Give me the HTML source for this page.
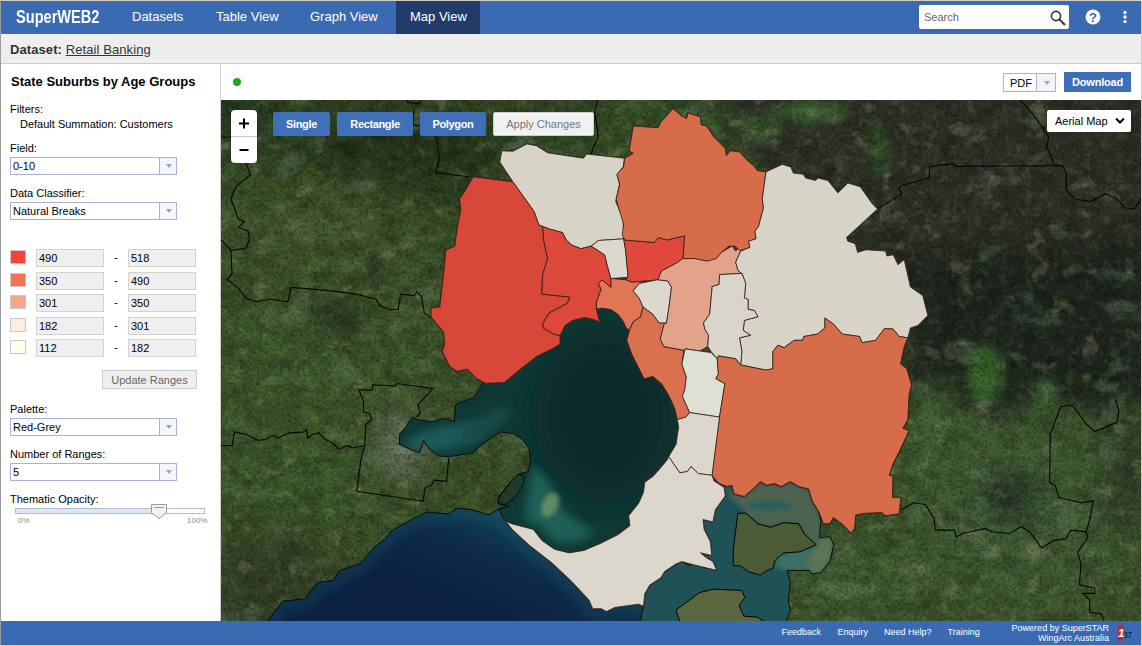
<!DOCTYPE html>
<html><head><meta charset="utf-8"><title>SuperWEB2</title>
<style>
*{box-sizing:border-box;margin:0;padding:0}
html,body{width:1142px;height:646px;overflow:hidden;background:#fff;font-family:"Liberation Sans",Arial,sans-serif;font-size:11px;color:#000}
#frame{position:absolute;left:0;top:0;width:1142px;height:646px;border:1px solid #cfcfcf;border-left-color:#9c9c9c;border-top-color:#d3cec5;pointer-events:none}
.abs{position:absolute}
#hdr{position:absolute;left:1px;top:1px;width:1140px;height:33px;background:#3a6bb2}
#logo{position:absolute;left:15px;top:5.5px;font-weight:bold;font-size:18px;color:#fff;transform-origin:0 50%;transform:scaleX(.81);white-space:nowrap;line-height:20px}
.nav{position:absolute;top:0;height:33px;line-height:31px;color:#fff;font-size:13px;white-space:nowrap}
#tabsel{position:absolute;left:395px;top:0;width:84px;height:33px;background:#213c6b}
#search{position:absolute;left:918px;top:4px;width:150px;height:24px;background:#fff;border-radius:2px}
#search span{position:absolute;left:5px;top:6px;font-size:11px;color:#666}
#dsbar{position:absolute;left:1px;top:34px;width:1140px;height:30px;background:#eee;border-bottom:1px solid #ccc}
#dsbar b{position:absolute;left:9px;top:7.5px;font-size:13px;color:#333;white-space:nowrap;letter-spacing:.09px}
#dsbar b span{font-weight:normal;text-decoration:underline}
#left{position:absolute;left:1px;top:64px;width:220px;height:557px;background:#fff;border-right:1px solid #ccc}
#left .t{position:absolute;white-space:nowrap;font-size:11px;line-height:13px}
.combo{position:absolute;left:9px;width:167px;height:18px;border:1px solid #a9b3cf;background:#fff;font-size:11px;line-height:16px;padding-left:2px}
.combo i{position:absolute;right:0;top:0;width:17px;height:16px;border-left:1px solid #a9b3cf;background:#f4f6fb}
.combo i:after{content:"";position:absolute;left:6px;top:6px;border:3.5px solid transparent;border-top:4px solid #93a3d0;border-bottom:0}
.sw{position:absolute;left:9px;width:16px;height:14px;border:1px solid #c8c8c8}
.inp{position:absolute;width:68px;height:18px;border:1px solid #d2d2d2;background:#efefef;font-size:11px;line-height:16px;padding-left:2px}
.dash{position:absolute;left:113px;font-size:11px;line-height:16px}
#upd{position:absolute;left:101px;top:306px;width:95px;height:19px;border:1px solid #ccc;background:#efefef;color:#666;font-size:11px;line-height:19px;text-align:center}
#toolbar{position:absolute;left:222px;top:64px;width:919px;height:36px;background:#fff}
#map{position:absolute;left:221px;top:100px;width:920px;height:521px;background:#2f4423;overflow:hidden}
.mbtn{position:absolute;top:12px;height:24px;background:#3f70b7;color:#fff;font-weight:bold;font-size:11px;line-height:24px;text-align:center;border-radius:2px;letter-spacing:-.35px}
#ftr{position:absolute;left:1px;top:621px;width:1140px;height:24px;background:#3a6bb2;color:#fff;font-size:9px;line-height:11px}
#ftr span{position:absolute;white-space:nowrap}
</style></head><body>
<div id="hdr">
 <div id="tabsel"></div>
 <div id="logo">SuperWEB2</div>
 <div class="nav" style="left:131px">Datasets</div>
 <div class="nav" style="left:215px">Table View</div>
 <div class="nav" style="left:309px">Graph View</div>
 <div class="nav" style="left:409px">Map View</div>
 <div id="search"><span>Search</span>
  <svg class="abs" style="left:130px;top:4px" width="18" height="18" viewBox="0 0 18 18"><circle cx="7" cy="7" r="4.6" fill="none" stroke="#333" stroke-width="1.6"/><path d="M10.4 10.4L15.5 15.5" stroke="#333" stroke-width="2" stroke-linecap="round"/></svg>
 </div>
 <svg class="abs" style="left:1084px;top:8px" width="16" height="16" viewBox="0 0 16 16"><circle cx="8" cy="8" r="7.5" fill="#fff"/><text x="8" y="12.7" text-anchor="middle" font-family="Liberation Sans, sans-serif" font-weight="bold" font-size="13" fill="#3a6bb2">?</text></svg>
 <svg class="abs" style="left:1121px;top:8px" width="6" height="16" viewBox="0 0 6 16"><circle cx="3" cy="3.5" r="1.7" fill="#fff"/><circle cx="3" cy="8" r="1.7" fill="#fff"/><circle cx="3" cy="12.6" r="1.7" fill="#fff"/></svg>
</div>
<div id="dsbar"><b>Dataset: <span>Retail Banking</span></b></div>
<div id="left">
 <div class="t" style="left:10px;top:10px;font-size:13px;font-weight:bold;line-height:15px">State Suburbs by Age Groups</div>
 <div class="t" style="left:9px;top:39px">Filters:</div>
 <div class="t" style="left:19px;top:54px">Default Summation: Customers</div>
 <div class="t" style="left:9px;top:78px">Field:</div>
 <div class="combo" style="top:93px">0-10<i></i></div>
 <div class="t" style="left:9px;top:123px">Data Classifier:</div>
 <div class="combo" style="top:138px">Natural Breaks<i></i></div>
 <div class="sw" style="top:186px;background:#f9423a"></div><div class="inp" style="left:35px;top:185px">490</div><div class="dash" style="top:185px">-</div><div class="inp" style="left:127px;top:185px">518</div>
 <div class="sw" style="top:209px;background:#f47354"></div><div class="inp" style="left:35px;top:208px">350</div><div class="dash" style="top:208px">-</div><div class="inp" style="left:127px;top:208px">490</div>
 <div class="sw" style="top:231px;background:#f4a78a"></div><div class="inp" style="left:35px;top:230px">301</div><div class="dash" style="top:230px">-</div><div class="inp" style="left:127px;top:230px">350</div>
 <div class="sw" style="top:254px;background:#faeee0"></div><div class="inp" style="left:35px;top:253px">182</div><div class="dash" style="top:253px">-</div><div class="inp" style="left:127px;top:253px">301</div>
 <div class="sw" style="top:276px;background:#fffff0"></div><div class="inp" style="left:35px;top:275px">112</div><div class="dash" style="top:275px">-</div><div class="inp" style="left:127px;top:275px">182</div>
 <div id="upd">Update Ranges</div>
 <div class="t" style="left:9px;top:339px">Palette:</div>
 <div class="combo" style="top:354px">Red-Grey<i></i></div>
 <div class="t" style="left:9px;top:384px">Number of Ranges:</div>
 <div class="combo" style="top:399px">5<i></i></div>
 <div class="t" style="left:9px;top:429px">Thematic Opacity:</div>
 <div class="abs" style="left:14px;top:444px;width:190px;height:6px;border:1px solid #b5b8c8;background:#fff"><div style="width:140px;height:4px;background:#dbe8fa"></div></div>
 <svg class="abs" style="left:150px;top:440px" width="17" height="16" viewBox="0 0 17 16"><path d="M.5 .5H15.5V8.5L8 14.8L.5 8.5Z" fill="#f2f2f2" stroke="#9a9a9a"/><path d="M3 3.5H13" stroke="#999"/></svg>
 <div class="t" style="left:17px;top:450px;font-size:8px;color:#888">0%</div>
 <div class="t" style="left:186px;top:450px;font-size:8px;color:#888">100%</div>
</div>
<div id="toolbar">
 <div class="abs" style="left:11px;top:14px;width:8px;height:8px;border-radius:4px;background:#1ea81e"></div>
 <div class="abs" style="left:781px;top:9px;width:53px;height:19px;border:1px solid #a9b3cf;font-size:11px;line-height:18px;padding-left:6px">PDF<i class="abs" style="right:0;top:0;width:19px;height:17px;border-left:1px solid #a9b3cf;background:#f3f4f7"></i><i class="abs" style="right:5.5px;top:7px;border:3.5px solid transparent;border-top:4px solid #97a7d2;border-bottom:0"></i></div>
 <div class="abs" style="left:842px;top:8px;width:67px;height:20px;background:#3e6eb5;color:#fff;font-weight:bold;font-size:11px;line-height:20px;text-align:center;letter-spacing:-.2px">Download</div>
</div>
<div id="map">
<!--MAPSVG--><svg class="abs" style="left:0;top:0" width="920" height="521" viewBox="221 100 920 521">
<defs>
<filter id="b30" x="-50%" y="-50%" width="200%" height="200%"><feGaussianBlur stdDeviation="28"/></filter>
<filter id="b15" x="-50%" y="-50%" width="200%" height="200%"><feGaussianBlur stdDeviation="13"/></filter>
<filter id="b6" x="-50%" y="-50%" width="200%" height="200%"><feGaussianBlur stdDeviation="5"/></filter>
<filter id="b2" x="-20%" y="-20%" width="140%" height="140%"><feGaussianBlur stdDeviation="2"/></filter>
<filter id="tex" x="0" y="0" width="100%" height="100%"><feTurbulence type="fractalNoise" baseFrequency="0.05 0.07" numOctaves="4" seed="7"/><feColorMatrix type="matrix" values="0 0 0 0 0  0 0 0 0 0  0 0 0 0 0  1.4 1.0 0 0 -0.85"/></filter>
<filter id="tex2" x="0" y="0" width="100%" height="100%"><feTurbulence type="fractalNoise" baseFrequency="0.12" numOctaves="3" seed="3"/><feColorMatrix type="matrix" values="0 0 0 0 .8  0 0 0 0 .8  0 0 0 0 .6  1.5 1.5 0 0 -1.45"/></filter>
<filter id="tex3" x="0" y="0" width="100%" height="100%"><feTurbulence type="fractalNoise" baseFrequency="0.35" numOctaves="2" seed="5"/><feColorMatrix type="matrix" values="0 0 0 0 0  0 0 0 0 0  0 0 0 0 0  2.4 0 0 0 -1.0"/></filter>
<filter id="tex4" x="0" y="0" width="100%" height="100%"><feTurbulence type="fractalNoise" baseFrequency="0.022 0.03" numOctaves="4" seed="11"/><feColorMatrix type="matrix" values="0 0 0 0 .12  0 0 0 0 .19  0 0 0 0 .11  8 0 0 0 -5.0"/></filter>
<filter id="tex5" x="0" y="0" width="100%" height="100%"><feTurbulence type="fractalNoise" baseFrequency="0.04 0.05" numOctaves="4" seed="23"/><feColorMatrix type="matrix" values="0 0 0 0 .45  0 0 0 0 .38  0 0 0 0 .2  0 8 0 0 -5.3"/></filter>
<linearGradient id="seag" gradientUnits="userSpaceOnUse" x1="500" y1="505" x2="455" y2="610"><stop offset="0" stop-color="#144a58"/><stop offset=".25" stop-color="#103650"/><stop offset=".5" stop-color="#0e2947"/><stop offset="1" stop-color="#0d2142"/></linearGradient>
<clipPath id="mc"><rect x="221" y="100" width="920" height="521"/></clipPath>
<clipPath id="seac"><polygon points="230,665 266.8,622 282.9,601.2 305.2,598.7 317.6,582.6 333.7,580.2 339.9,570.3 359.8,564.1 374.6,546.7 384.5,539.3 392,530.6 409.3,520.7 426.7,512 449,514 456.4,508.3 471.2,509.6 489,514.9 498.9,508.7 506,521.4 512.2,529.4 529.6,545.5 551.9,562.8 571.7,581.4 589,600 592.7,608.7 601.4,608.7 606.4,611.6 615,607.4 638.6,604.2 643.5,606.2 660,600 690,600 700,622 705,665"/></clipPath>
<clipPath id="bayc"><polygon points="482.8,383 474.1,397.2 464.2,400.9 455.6,404.6 454.3,421.9 444.4,418.2 430.8,421.9 417.2,419.5 412.2,417 406,426.9 399.8,433.1 399.3,444.2 409.7,449.2 419.6,452.9 423.4,440.5 429.6,449.2 439.5,456.1 449.4,456.6 472.9,452.9 484.1,443 500.2,431.9 513.8,433.8 522.5,439.3 528.7,448 530.6,459.1 528.7,471.5 518.8,474 508.8,483.9 498.9,496.3 497.7,503.7 508.8,506.2 498.9,508.7 502,516 506,521.4 520,535 560,560 600,555 640,530 660,480 685,460 690,420 690,380 660,330 640,300 600,300 570,310 550,340 520,360"/></clipPath>
<clipPath id="wpc"><polygon points="690,566 696,530 706,500 714,484 722,480 733,482 734.3,493.9 744.2,496.4 752.9,488.9 760.3,481.5 766.5,485.2 774,483.5 781.4,486.5 790.1,481.5 798.8,486.5 808.7,488.9 812.4,501.3 818.6,511.2 820.9,521.4 819.7,537.8 830.2,536.6 833.7,544.8 830.2,561.1 820.9,572.8 811.5,574 809.2,570.5 787,570.5 790.5,582.2 788.1,600.9 790.5,610.2 785.8,622 640,622 643.5,606.2 644.8,593.8 649.7,585.1 660.9,577.7 664.6,571.5 675.7,564.1 681.9,561.6"/></clipPath>
</defs>
<g clip-path="url(#mc)">
<rect x="221" y="100" width="920" height="521" fill="#40592c"/>
<polygon points="650,90 700,112 740,140 765,170 800,200 860,260 905,300 915,340 900,400 925,415 960,400 1000,425 1040,405 1075,400 1100,425 1150,400 1150,90" fill="#32362a" filter="url(#b6)"/>
<polygon points="880,255 1150,240 1150,395 1100,415 1070,395 1040,400 1000,415 960,395 925,405 905,390 915,330" fill="#232b20" filter="url(#b15)"/>
<ellipse cx="400" cy="150" rx="110" ry="55" fill="#26371f" filter="url(#b30)"/>
<ellipse cx="250" cy="120" rx="60" ry="40" fill="#2c4224" filter="url(#b30)"/>
<ellipse cx="330" cy="230" rx="90" ry="40" fill="#4a6030" filter="url(#b30)"/>
<ellipse cx="320" cy="370" rx="120" ry="60" fill="#44602d" filter="url(#b30)"/>
<ellipse cx="300" cy="490" rx="100" ry="50" fill="#43602d" filter="url(#b30)"/>
<ellipse cx="340" cy="318" rx="26" ry="20" fill="#2b3c25" filter="url(#b15)"/>
<ellipse cx="375" cy="272" rx="9" ry="16" fill="#2e3f27" filter="url(#b6)"/>
<ellipse cx="265" cy="585" rx="75" ry="45" fill="#39432a" filter="url(#b30)"/>
<ellipse cx="402" cy="445" rx="22" ry="35" fill="#74806a" filter="url(#b15)"/>
<ellipse cx="560" cy="112" rx="70" ry="25" fill="#2d4526" filter="url(#b30)"/>
<ellipse cx="690" cy="112" rx="60" ry="18" fill="#3a5a2d" filter="url(#b15)"/>
<ellipse cx="1030" cy="520" rx="120" ry="100" fill="#466439" filter="url(#b30)"/>
<ellipse cx="930" cy="440" rx="30" ry="60" fill="#446636" filter="url(#b15)"/>
<ellipse cx="860" cy="585" rx="60" ry="40" fill="#4a6a39" filter="url(#b30)"/>
<ellipse cx="1010" cy="495" rx="32" ry="18" fill="#27392a" filter="url(#b15)"/>
<ellipse cx="1125" cy="470" rx="25" ry="70" fill="#34482a" filter="url(#b15)"/>
<ellipse cx="985" cy="375" rx="18" ry="30" fill="#3d6a2e" filter="url(#b6)"/>
<ellipse cx="1045" cy="400" rx="12" ry="22" fill="#3a6230" filter="url(#b6)"/>
<ellipse cx="810" cy="112" rx="40" ry="12" fill="#3d6330" filter="url(#b6)"/>
<ellipse cx="878" cy="150" rx="10" ry="30" fill="#34502c" filter="url(#b6)"/>
<ellipse cx="760" cy="128" rx="25" ry="12" fill="#3a5a2e" filter="url(#b6)"/>
<rect x="221" y="100" width="920" height="521" filter="url(#tex)" fill="#000" opacity=".3"/>
<rect x="221" y="100" width="920" height="521" filter="url(#tex2)" opacity=".12"/>
<rect x="221" y="100" width="920" height="521" filter="url(#tex4)" opacity=".4"/>
<rect x="221" y="100" width="920" height="521" filter="url(#tex5)" opacity=".22"/>
<rect x="221" y="100" width="920" height="521" filter="url(#tex3)" opacity=".3"/>
<polygon points="230,665 266.8,622 282.9,601.2 305.2,598.7 317.6,582.6 333.7,580.2 339.9,570.3 359.8,564.1 374.6,546.7 384.5,539.3 392,530.6 409.3,520.7 426.7,512 449,514 456.4,508.3 471.2,509.6 489,514.9 498.9,508.7 506,521.4 512.2,529.4 529.6,545.5 551.9,562.8 571.7,581.4 589,600 592.7,608.7 601.4,608.7 606.4,611.6 615,607.4 638.6,604.2 643.5,606.2 660,600 690,600 700,622 705,665" fill="url(#seag)"/>
<g clip-path="url(#seac)">
<polygon points="230,665 266.8,622 282.9,601.2 305.2,598.7 317.6,582.6 333.7,580.2 339.9,570.3 359.8,564.1 374.6,546.7 384.5,539.3 392,530.6 409.3,520.7 426.7,512 449,514 456.4,508.3 471.2,509.6 489,514.9 498.9,508.7 506,521.4 512.2,529.4 529.6,545.5 551.9,562.8 571.7,581.4 589,600 592.7,608.7 601.4,608.7 606.4,611.6 615,607.4 638.6,604.2 643.5,606.2 660,600 690,600 700,622 705,665" fill="none" stroke="#165a68" stroke-width="22" filter="url(#b6)" opacity=".3"/>
</g>
<polygon points="230,665 266.8,622 282.9,601.2 305.2,598.7 317.6,582.6 333.7,580.2 339.9,570.3 359.8,564.1 374.6,546.7 384.5,539.3 392,530.6 409.3,520.7 426.7,512 449,514 456.4,508.3 471.2,509.6 489,514.9 498.9,508.7 506,521.4 512.2,529.4 529.6,545.5 551.9,562.8 571.7,581.4 589,600 592.7,608.7 601.4,608.7 606.4,611.6 615,607.4 638.6,604.2 643.5,606.2 660,600 690,600 700,622 705,665" fill="none" stroke="#050a0a" stroke-width="1"/>
<polygon points="482.8,383 474.1,397.2 464.2,400.9 455.6,404.6 454.3,421.9 444.4,418.2 430.8,421.9 417.2,419.5 412.2,417 406,426.9 399.8,433.1 399.3,444.2 409.7,449.2 419.6,452.9 423.4,440.5 429.6,449.2 439.5,456.1 449.4,456.6 472.9,452.9 484.1,443 500.2,431.9 513.8,433.8 522.5,439.3 528.7,448 530.6,459.1 528.7,471.5 518.8,474 508.8,483.9 498.9,496.3 497.7,503.7 508.8,506.2 498.9,508.7 502,516 506,521.4 520,535 560,560 600,555 640,530 660,480 685,460 690,420 690,380 660,330 640,300 600,300 570,310 550,340 520,360" fill="#0f3834"/>
<g clip-path="url(#bayc)">
<ellipse cx="605" cy="415" rx="70" ry="85" fill="#0a2b2b" filter="url(#b15)"/>
<ellipse cx="445" cy="438" rx="42" ry="12" fill="#1d5a58" filter="url(#b6)" transform="rotate(-12 445 438)"/>
<ellipse cx="485" cy="425" rx="30" ry="9" fill="#184c4a" filter="url(#b6)" transform="rotate(-30 485 425)"/>
<path d="M532 466 Q550 476 556 500 Q568 520 596 532 Q576 548 552 540 Q540 522 524 520 Q528 495 532 466Z" fill="#1f6058" filter="url(#b6)"/>
<ellipse cx="550" cy="505" rx="8" ry="13" fill="#5f8a62" filter="url(#b2)" transform="rotate(25 550 505)"/>
</g>
<polygon points="482.8,383 474.1,397.2 464.2,400.9 455.6,404.6 454.3,421.9 444.4,418.2 430.8,421.9 417.2,419.5 412.2,417 406,426.9 399.8,433.1 399.3,444.2 409.7,449.2 419.6,452.9 423.4,440.5 429.6,449.2 439.5,456.1 449.4,456.6 472.9,452.9 484.1,443 500.2,431.9 513.8,433.8 522.5,439.3 528.7,448 530.6,459.1 528.7,471.5 518.8,474 508.8,483.9 498.9,496.3 497.7,503.7 508.8,506.2 498.9,508.7 502,516 506,521.4 520,535 560,560 600,555 640,530 660,480 685,460 690,420 690,380 660,330 640,300 600,300 570,310 550,340 520,360" fill="none" stroke="#070d0b" stroke-width="1"/>
<polygon points="690,566 696,530 706,500 714,484 722,480 733,482 734.3,493.9 744.2,496.4 752.9,488.9 760.3,481.5 766.5,485.2 774,483.5 781.4,486.5 790.1,481.5 798.8,486.5 808.7,488.9 812.4,501.3 818.6,511.2 820.9,521.4 819.7,537.8 830.2,536.6 833.7,544.8 830.2,561.1 820.9,572.8 811.5,574 809.2,570.5 787,570.5 790.5,582.2 788.1,600.9 790.5,610.2 785.8,622 640,622 643.5,606.2 644.8,593.8 649.7,585.1 660.9,577.7 664.6,571.5 675.7,564.1 681.9,561.6" fill="#1e5256"/>
<g clip-path="url(#wpc)">
<polygon points="726,488 734.3,493.9 744.2,496.4 752.9,488.9 760.3,481.5 766.5,485.2 774,483.5 781.4,486.5 790.1,481.5 798.8,486.5 808.7,488.9 812.4,501.3 818.6,511.2 820.9,521.4 819.7,537.8 816.2,544.8 804.5,534.3 798.7,523.8 783.5,522.6 770.6,527.3 757.8,523.8 746.1,513.2 740,505 732,500" fill="#4e6450" filter="url(#b2)"/>
<polygon points="819.7,537.8 830.2,536.6 833.7,544.8 830.2,561.1 820.9,572.8 811.5,574 809.2,570.5 800,565 805,555 816.2,544.8" fill="#5c7357" filter="url(#b2)"/>
<polygon points="773,566 778,556 790,552 816.2,544.8 806,558 809,571 787,571" fill="#3d6f62" filter="url(#b2)"/>
<ellipse cx="770" cy="506" rx="22" ry="5" fill="#2a5f5c" filter="url(#b2)"/>
</g>
<polygon points="690,566 696,530 706,500 714,484 722,480 733,482 734.3,493.9 744.2,496.4 752.9,488.9 760.3,481.5 766.5,485.2 774,483.5 781.4,486.5 790.1,481.5 798.8,486.5 808.7,488.9 812.4,501.3 818.6,511.2 820.9,521.4 819.7,537.8 830.2,536.6 833.7,544.8 830.2,561.1 820.9,572.8 811.5,574 809.2,570.5 787,570.5 790.5,582.2 788.1,600.9 790.5,610.2 785.8,622 640,622 643.5,606.2 644.8,593.8 649.7,585.1 660.9,577.7 664.6,571.5 675.7,564.1 681.9,561.6" fill="none" stroke="#070d0b" stroke-width="1"/>
<polygon points="737.9,513.2 746.1,513.2 757.8,523.8 770.6,527.3 783.5,522.6 798.7,523.8 804.5,534.3 816.2,544.8 799.8,551.8 783.5,553 775.3,560 773,568.2 767.1,570.5 760.1,575.2 748.4,571.7 740.2,565.8 733.2,565.8 733.2,549.5" fill="#4d5a37" stroke="#000" stroke-width="1"/>
<polygon points="676,610 690,599.7 699.3,592.7 713.4,589.2 741.4,590.4 744.9,597.4 739.1,605.5 743.8,616.1 757.8,617.2 764.8,622 680,622" fill="#5a663e" stroke="#000" stroke-width="1"/>
<polygon points="518.8,474 523.7,476.5 523.7,483.9 513.8,498.8 503.9,505 497.7,501.2 501.4,493.8 511.3,481.4" fill="#1f3a28" stroke="#000" stroke-width=".8"/>
<polyline points="221,137 231,137.2" fill="none" stroke="#050505" stroke-width="1.1"/>
<polyline points="245.8,163.2 250.7,174.3 235.9,186.7 230.9,199.1 238.3,218.9 244.5,221.4 238.3,227.4 248.3,231.1 249.5,239.8 245.8,248.5 230.9,250.2 221,239.8" fill="none" stroke="#050505" stroke-width="1.1"/>
<polyline points="230.9,250.2 232.1,274.5 227.2,279.5 238.3,288.1 245.8,298 255.7,301.8 270.6,299.3 287.9,301.8 291.1,287.4 315.2,289.4 339.9,291.9 357.3,294.3 375.9,299.3 379.6,305.5 389.5,309.7 398.2,309.2 400.6,294.3 414.3,295.6 416.7,291.9 421.7,296.8 424.2,312.9 431.6,317.9" fill="none" stroke="#050505" stroke-width="1.1"/>
<polyline points="406.8,100 408.1,102.5 419.2,103.7 420.4,100" fill="none" stroke="#050505" stroke-width="1.1"/>
<polyline points="414,110 413,124.8 419.2,126 436.6,137.2 439.4,160 435.6,172.5 470,177" fill="none" stroke="#050505" stroke-width="1.1"/>
<polyline points="597.2,100 594.7,112.4 598.4,137.2 593.4,147.1 591,154" fill="none" stroke="#050505" stroke-width="1.1"/>
<polyline points="358.5,389.7 372.1,390.2 372.6,384.8 395.7,386 396.9,383.5 432.8,388.5 418,404.6 420.4,413.3 416.7,417" fill="none" stroke="#050505" stroke-width="1.1"/>
<polyline points="358.5,389.7 363.5,400.9 363.5,412 369.7,413.3 372.1,419.5 365.9,424.4 364.7,445.5 361,459.1 356.8,491.3 422.9,501.2 425.4,487.6 431.6,485.1 434.1,480.2 446.5,481.4 448.9,457.9" fill="none" stroke="#050505" stroke-width="1.1"/>
<polyline points="221,445.5 232.1,445.5 234.6,431.9 245.8,434.3 258.2,440.5 265.6,439.3 273,435.6 278,438 289.1,433.1 304,431.9 306.5,429.4 307.7,438 312.7,434.3 318.9,433.1 325.1,439.3 332.5,443 338.7,449.2 347.4,445.5 352.3,448 364.7,445.5" fill="none" stroke="#050505" stroke-width="1.1"/>
<polyline points="1020.6,100 1035.4,117.3 1049,137.2 1046.6,145.8 1054,164.9 1062.7,165.7 1066.4,173.1 1066.4,190.4 1075.1,199.1 1090,201.6 1106,193.7 1117.2,199.1 1124.6,207.8 1134.5,209 1140.7,199.1" fill="none" stroke="#050505" stroke-width="1.1"/>
<polyline points="1062.7,165.7 956.1,166.4 953.7,163.9 941.3,164.9 930.1,166.4 928.9,178 920.2,180.5 901.6,185.5 899.2,188 901.6,194.1 876.9,209" fill="none" stroke="#050505" stroke-width="1.1"/>
<polyline points="901.4,509.6 913.4,502.7 925.3,504.4 933.9,518.1 935.6,530.1 954.4,530.1 956.1,536.9 963,533.5 985.2,528.4 992.1,531.8 1009.2,533.5 1021.2,526.7 1029.7,531.8 1041.7,547.9 1053.7,540.4 1065.7,538.7 1070.8,530.1 1086.2,531.8 1089.7,519.8 1093.1,501 1081.1,502.7 1058.8,497.6 1055.4,485.6 1049.6,482.2 1050.3,434.2 1060.6,406.8 1072.5,405.1 1086.2,424 1094.8,431.5 1117,422.3 1118.8,410.3 1115.3,400" fill="none" stroke="#050505" stroke-width="1.1"/>
<polyline points="1086.2,531.8 1088,537 1077.7,552.3 1081.1,564.3 1079.4,584.9 1094.8,588.3 1094.8,593.4 1082.8,593.4 1089.7,600.3 1089.7,612.3 1101.6,614 1103.4,621" fill="none" stroke="#050505" stroke-width="1.1"/>
<polygon points="499.8,162 501.8,150.8 512.9,151.3 527,143.9 536.5,145.8 547.6,152.8 583.5,158.2 586.5,154 624.4,158.2 623.2,166.9 617,174.3 619.5,184.2 615.7,201.6 623.2,218.9 623.7,238.8 598.4,240.5 591,246.2 581,248.7 571.6,245 566.2,240 562.5,232.6 548.8,228.8 538.9,225.1 534,211.5 512.9,181.8" fill="#3a2a22" stroke="#3a2a22" stroke-width="1.6" stroke-linejoin="round"/>
<polygon points="598.4,240.5 623.7,238.8 625.6,250 628.1,277.3 610.8,278.5 607,264.9 604.6,255 597.2,250 591,246.2" fill="#3a2a22" stroke="#3a2a22" stroke-width="1.6" stroke-linejoin="round"/>
<polygon points="623.7,238.8 624.8,240 654.5,242.5 658.2,237.5 666.9,240 684.7,235.8 683,258.6 677.7,262.4 661.6,271 657.9,279.7 646.7,281 631.8,282.2 625.6,279.7 628.1,277.3 625.6,250" fill="#3a2a22" stroke="#3a2a22" stroke-width="1.6" stroke-linejoin="round"/>
<polygon points="602.1,279.7 610.8,287.2 610.8,278.5 625.6,279.7 631.8,282.2 646.7,281 639.3,283.4 633.1,290.9 639.3,298.3 643,307 640.5,316.9 633.1,321.9 629.4,330.5 625.6,326.8 623.7,321.9 618.2,314.4 610.8,309.5 602.1,308.2 596.4,309 596.4,302 600.9,289.6 598.4,283.4" fill="#3a2a22" stroke="#3a2a22" stroke-width="1.6" stroke-linejoin="round"/>
<polygon points="633.1,290.9 639.3,283.4 657.9,279.7 667.8,281 671.5,287.2 669,307 666.5,323.1 659.1,323.1 652.9,314.4 643,307 639.3,298.3" fill="#3a2a22" stroke="#3a2a22" stroke-width="1.6" stroke-linejoin="round"/>
<polygon points="629.4,330.5 633.1,321.9 640.5,316.9 643,307 652.9,314.4 659.1,323.1 666.5,323.1 664,324.3 660.3,339.2 664,346.6 683.9,350.3 681.9,364 686.3,377 684.8,390 682.3,396 689.7,412.6 686,417.1 677.3,419.6 675.2,410 672.7,403.6 667.8,393.7 661.6,383.8 652.9,376.4 644.2,378.8 638,366.5 631.8,354.1 626.9,340.4" fill="#3a2a22" stroke="#3a2a22" stroke-width="1.6" stroke-linejoin="round"/>
<polygon points="682.6,258.7 694.9,258.5 707.3,261 717.2,257.3 719.6,253.5 725.8,249.8 732,246.1 735.7,251.1 739.5,247.3 740.7,251.1 735.7,262.2 738.2,270.9 741.9,273.4 719.6,274.6 719.1,284.5 712.2,286.5 709.7,314.2 703.5,322.9 704.8,329.1 708.5,335.3 707.8,346.5 700,351 685,348.9 683.9,350.3 664,346.6 660.3,339.2 664,324.3 666.5,323.1 669,307 671.5,287.2 667.8,281 657.9,279.7 661.6,271 677.7,262.4" fill="#3a2a22" stroke="#3a2a22" stroke-width="1.6" stroke-linejoin="round"/>
<polygon points="624.8,158.2 633.4,153.3 629.2,150.8 633.4,126 658.2,127.8 660.7,122.3 673.1,108.7 681.8,116.1 686.7,118.6 688,112.9 700.3,116.8 701.1,124.8 706.5,126 714,137.2 725.1,148.3 726.4,155.7 730.1,150.8 740,152 746.2,159.5 753.6,165.7 757.3,170.6 766,171.9 762.3,199.1 763.5,207.8 758.6,226.4 754.9,231.3 756.1,238.8 748.7,241.2 749.9,247.4 740,250.6 735,246.2 728.8,246.2 721.4,252.4 716.5,258.6 707.3,261 694.9,258.5 683,258.6 684.7,235.8 666.9,240 658.2,237.5 654.5,242.5 624.8,240 622.3,235 623.5,223.9 616.1,199.1 619.8,184.2 616.8,174.3 623.5,166.9" fill="#3a2a22" stroke="#3a2a22" stroke-width="1.6" stroke-linejoin="round"/>
<polygon points="766,171.9 782.1,164.4 790.8,166.9 793.3,173.1 803.2,174.3 805.7,178 815.6,180.5 818,178 827.9,180.5 837.9,192.9 847.8,183 860.2,186.7 872.5,204.1 877.5,209 846.5,237.5 847.8,241.2 855.2,243.7 857.7,252.4 865.8,249.8 885.6,251.1 886.9,256 893.1,254.8 898,264.7 904.2,259.7 910.4,287 922.8,295.7 927.8,315.5 917.9,325.4 910.4,327.9 907.9,337.8 899.3,336.5 893.1,329.1 884.4,328.6 875.7,340.3 862.1,342.7 859.6,336.5 842.3,334.1 833.6,324.2 824.9,318 824.9,327.9 817.5,334.1 803.9,336.5 802.6,340.3 794,340.3 784.1,347.7 777.9,345.2 772.9,351.4 772.9,368.8 765.5,370 740.7,365 741.9,351.4 739.5,337.8 750.6,335.3 743.2,330.3 744.4,320.4 758,316.7 754.3,310.5 748.1,309.3 748.1,299.4 744.4,298.1 745.7,283.3 741.9,273.4 738.2,270.9 735.7,262.2 740.7,251.1 749.9,247.4 748.7,241.2 756.1,238.8 754.9,231.3 758.6,226.4 763.5,207.8 762.3,199.1" fill="#3a2a22" stroke="#3a2a22" stroke-width="1.6" stroke-linejoin="round"/>
<polygon points="741.9,273.4 719.6,274.6 719.1,284.5 712.2,286.5 709.7,314.2 703.5,322.9 704.8,329.1 708.5,335.3 707.8,346.5 711,351.4 717.2,358.8 718.4,355.9 735.7,358.8 740.7,365 741.9,351.4 739.5,337.8 750.6,335.3 743.2,330.3 744.4,320.4 758,316.7 754.3,310.5 748.1,309.3 748.1,299.4 744.4,298.1 745.7,283.3" fill="#3a2a22" stroke="#3a2a22" stroke-width="1.6" stroke-linejoin="round"/>
<polygon points="685,348.9 700,351 711,352.6 717.2,358.8 718.4,373.7 715.9,378.7 724.9,383.6 719.5,417.1 689.7,412.6 682.3,396 684.8,390 686.3,377 681.9,364" fill="#3a2a22" stroke="#3a2a22" stroke-width="1.6" stroke-linejoin="round"/>
<polygon points="717.2,358.8 718.4,355.9 735.7,358.8 740.7,365 765.5,370 772.9,368.8 772.9,351.4 777.9,345.2 784.1,347.7 794,340.3 802.6,340.3 803.9,336.5 817.5,334.1 824.9,327.9 824.9,318 833.6,324.2 842.3,334.1 859.6,336.5 862.1,342.7 875.7,340.3 884.4,328.6 893.1,329.1 899.3,336.5 907.9,337.8 904.2,346.5 900.5,363.8 906.7,368.8 911.5,384.9 909,394.8 907.8,419.6 902.8,428.2 909,430.7 900.3,449.3 892.9,464.2 889.2,475.3 892.9,476.5 892.4,497.6 900.8,497.6 899.1,513.7 885.5,515.7 881.8,512.5 865.6,513.2 855.7,514.9 854.5,528.6 851,533 843.3,524.9 833.4,517.4 829.7,523.6 823.5,523.6 818.6,511.2 812.4,501.3 808.7,488.9 798.8,486.5 790.1,481.5 781.4,486.5 774,483.5 766.5,485.2 760.3,481.5 752.9,488.9 744.2,496.4 734.3,493.9 731.9,485.2 726.9,486.5 718.2,482.7 712,475.3 719.5,417.1 724.9,383.6 715.9,378.7 718.4,373.7" fill="#3a2a22" stroke="#3a2a22" stroke-width="1.6" stroke-linejoin="round"/>
<polygon points="689.7,412.6 719.5,417.1 712,475.3 698.4,473.6 691,466.6 687.3,471.6 679.8,472.8 668.7,456.7 676.1,444.3 678.6,427 677.3,419.6 686,417.1" fill="#3a2a22" stroke="#3a2a22" stroke-width="1.6" stroke-linejoin="round"/>
<polygon points="668.7,456.7 679.8,472.8 687.3,471.6 691,466.6 698.4,473.6 712,475.3 714.1,481.1 724,487.3 725.3,495.9 715.4,509.6 712.9,521.9 703,519.5 704.2,529.4 710.4,541.8 711.7,555.4 700.5,552.9 706.7,557.9 712.9,561.6 716.6,570.3 695.6,565.3 681.9,561.6 675.7,564.1 664.6,571.5 660.9,577.7 649.7,585.1 644.8,593.8 643.5,606.2 638.6,604.2 615,607.4 606.4,611.6 601.4,608.7 592.7,608.7 589,600 571.7,581.4 551.9,562.8 529.6,545.5 512.2,529.4 506,521.4 512.2,523.9 533.3,529.4 541.9,540.5 554.3,549.2 569.2,552.9 584.1,550.4 601.4,543 618.7,534.3 629.9,525.7 628.7,515.7 638.6,503.4 643.5,492.2 644.8,482.3 653.4,476.1 660.9,467.4 667.1,460" fill="#3a2a22" stroke="#3a2a22" stroke-width="1.6" stroke-linejoin="round"/>
<polygon points="473.3,176.8 512.9,181.8 534,211.5 538.9,225.1 542.6,226.4 543.9,241.2 547.6,258.6 542.6,274.8 541.9,294.1 569.9,297.1 567.4,303.3 548.8,313.2 543.1,323.1 543.1,328 553.8,334.2 560,335.5 560,344.1 553.8,347.9 536.5,356.5 519.1,370.2 504.2,382.6 485.7,383.3 477,378.8 467.1,368.9 457.2,371.4 449.7,366.5 442.3,351.6 444.8,344.2 443.5,331.8 431.1,316.9 431.1,308.2 439.8,307 443.5,274.8 446,250 454.7,246.2 457.2,228.8 460.9,209 459.6,199.1 464.6,191.7" fill="#3a2a22" stroke="#3a2a22" stroke-width="1.6" stroke-linejoin="round"/>
<polygon points="542.6,226.4 548.8,228.8 562.5,232.6 566.2,240 571.6,245 581,248.7 591,246.2 597.2,250 604.6,255 607,264.9 610.8,278.5 610.8,287.2 602.1,279.7 598.4,283.4 600.9,289.6 596.4,302 596,308.2 597.2,311.9 599.6,321.9 593.4,319.4 584.8,317.4 572.4,320.6 565,325.6 560,335.5 553.8,334.2 543.1,328 543.1,323.1 548.8,313.2 567.4,303.3 569.9,297.1 541.9,294.1 542.6,274.8 547.6,258.6 543.9,241.2" fill="#3a2a22" stroke="#3a2a22" stroke-width="1.6" stroke-linejoin="round"/>
<polygon points="499.8,162 501.8,150.8 512.9,151.3 527,143.9 536.5,145.8 547.6,152.8 583.5,158.2 586.5,154 624.4,158.2 623.2,166.9 617,174.3 619.5,184.2 615.7,201.6 623.2,218.9 623.7,238.8 598.4,240.5 591,246.2 581,248.7 571.6,245 566.2,240 562.5,232.6 548.8,228.8 538.9,225.1 534,211.5 512.9,181.8" fill="#d7d3c7" stroke="#30201a" stroke-width=".8" stroke-linejoin="round"/>
<polygon points="598.4,240.5 623.7,238.8 625.6,250 628.1,277.3 610.8,278.5 607,264.9 604.6,255 597.2,250 591,246.2" fill="#dcd8cd" stroke="#30201a" stroke-width=".8" stroke-linejoin="round"/>
<polygon points="623.7,238.8 624.8,240 654.5,242.5 658.2,237.5 666.9,240 684.7,235.8 683,258.6 677.7,262.4 661.6,271 657.9,279.7 646.7,281 631.8,282.2 625.6,279.7 628.1,277.3 625.6,250" fill="#e1483c" stroke="#30201a" stroke-width=".8" stroke-linejoin="round"/>
<polygon points="602.1,279.7 610.8,287.2 610.8,278.5 625.6,279.7 631.8,282.2 646.7,281 639.3,283.4 633.1,290.9 639.3,298.3 643,307 640.5,316.9 633.1,321.9 629.4,330.5 625.6,326.8 623.7,321.9 618.2,314.4 610.8,309.5 602.1,308.2 596.4,309 596.4,302 600.9,289.6 598.4,283.4" fill="#e07656" stroke="#30201a" stroke-width=".8" stroke-linejoin="round"/>
<polygon points="633.1,290.9 639.3,283.4 657.9,279.7 667.8,281 671.5,287.2 669,307 666.5,323.1 659.1,323.1 652.9,314.4 643,307 639.3,298.3" fill="#dcd8cd" stroke="#30201a" stroke-width=".8" stroke-linejoin="round"/>
<polygon points="629.4,330.5 633.1,321.9 640.5,316.9 643,307 652.9,314.4 659.1,323.1 666.5,323.1 664,324.3 660.3,339.2 664,346.6 683.9,350.3 681.9,364 686.3,377 684.8,390 682.3,396 689.7,412.6 686,417.1 677.3,419.6 675.2,410 672.7,403.6 667.8,393.7 661.6,383.8 652.9,376.4 644.2,378.8 638,366.5 631.8,354.1 626.9,340.4" fill="#db7050" stroke="#30201a" stroke-width=".8" stroke-linejoin="round"/>
<polygon points="682.6,258.7 694.9,258.5 707.3,261 717.2,257.3 719.6,253.5 725.8,249.8 732,246.1 735.7,251.1 739.5,247.3 740.7,251.1 735.7,262.2 738.2,270.9 741.9,273.4 719.6,274.6 719.1,284.5 712.2,286.5 709.7,314.2 703.5,322.9 704.8,329.1 708.5,335.3 707.8,346.5 700,351 685,348.9 683.9,350.3 664,346.6 660.3,339.2 664,324.3 666.5,323.1 669,307 671.5,287.2 667.8,281 657.9,279.7 661.6,271 677.7,262.4" fill="#e3a38a" stroke="#30201a" stroke-width=".8" stroke-linejoin="round"/>
<polygon points="624.8,158.2 633.4,153.3 629.2,150.8 633.4,126 658.2,127.8 660.7,122.3 673.1,108.7 681.8,116.1 686.7,118.6 688,112.9 700.3,116.8 701.1,124.8 706.5,126 714,137.2 725.1,148.3 726.4,155.7 730.1,150.8 740,152 746.2,159.5 753.6,165.7 757.3,170.6 766,171.9 762.3,199.1 763.5,207.8 758.6,226.4 754.9,231.3 756.1,238.8 748.7,241.2 749.9,247.4 740,250.6 735,246.2 728.8,246.2 721.4,252.4 716.5,258.6 707.3,261 694.9,258.5 683,258.6 684.7,235.8 666.9,240 658.2,237.5 654.5,242.5 624.8,240 622.3,235 623.5,223.9 616.1,199.1 619.8,184.2 616.8,174.3 623.5,166.9" fill="#d76c4a" stroke="#30201a" stroke-width=".8" stroke-linejoin="round"/>
<polygon points="766,171.9 782.1,164.4 790.8,166.9 793.3,173.1 803.2,174.3 805.7,178 815.6,180.5 818,178 827.9,180.5 837.9,192.9 847.8,183 860.2,186.7 872.5,204.1 877.5,209 846.5,237.5 847.8,241.2 855.2,243.7 857.7,252.4 865.8,249.8 885.6,251.1 886.9,256 893.1,254.8 898,264.7 904.2,259.7 910.4,287 922.8,295.7 927.8,315.5 917.9,325.4 910.4,327.9 907.9,337.8 899.3,336.5 893.1,329.1 884.4,328.6 875.7,340.3 862.1,342.7 859.6,336.5 842.3,334.1 833.6,324.2 824.9,318 824.9,327.9 817.5,334.1 803.9,336.5 802.6,340.3 794,340.3 784.1,347.7 777.9,345.2 772.9,351.4 772.9,368.8 765.5,370 740.7,365 741.9,351.4 739.5,337.8 750.6,335.3 743.2,330.3 744.4,320.4 758,316.7 754.3,310.5 748.1,309.3 748.1,299.4 744.4,298.1 745.7,283.3 741.9,273.4 738.2,270.9 735.7,262.2 740.7,251.1 749.9,247.4 748.7,241.2 756.1,238.8 754.9,231.3 758.6,226.4 763.5,207.8 762.3,199.1" fill="#d7d3c7" stroke="#30201a" stroke-width=".8" stroke-linejoin="round"/>
<polygon points="741.9,273.4 719.6,274.6 719.1,284.5 712.2,286.5 709.7,314.2 703.5,322.9 704.8,329.1 708.5,335.3 707.8,346.5 711,351.4 717.2,358.8 718.4,355.9 735.7,358.8 740.7,365 741.9,351.4 739.5,337.8 750.6,335.3 743.2,330.3 744.4,320.4 758,316.7 754.3,310.5 748.1,309.3 748.1,299.4 744.4,298.1 745.7,283.3" fill="#d9d5ca" stroke="#30201a" stroke-width=".8" stroke-linejoin="round"/>
<polygon points="685,348.9 700,351 711,352.6 717.2,358.8 718.4,373.7 715.9,378.7 724.9,383.6 719.5,417.1 689.7,412.6 682.3,396 684.8,390 686.3,377 681.9,364" fill="#dee0d5" stroke="#30201a" stroke-width=".8" stroke-linejoin="round"/>
<polygon points="717.2,358.8 718.4,355.9 735.7,358.8 740.7,365 765.5,370 772.9,368.8 772.9,351.4 777.9,345.2 784.1,347.7 794,340.3 802.6,340.3 803.9,336.5 817.5,334.1 824.9,327.9 824.9,318 833.6,324.2 842.3,334.1 859.6,336.5 862.1,342.7 875.7,340.3 884.4,328.6 893.1,329.1 899.3,336.5 907.9,337.8 904.2,346.5 900.5,363.8 906.7,368.8 911.5,384.9 909,394.8 907.8,419.6 902.8,428.2 909,430.7 900.3,449.3 892.9,464.2 889.2,475.3 892.9,476.5 892.4,497.6 900.8,497.6 899.1,513.7 885.5,515.7 881.8,512.5 865.6,513.2 855.7,514.9 854.5,528.6 851,533 843.3,524.9 833.4,517.4 829.7,523.6 823.5,523.6 818.6,511.2 812.4,501.3 808.7,488.9 798.8,486.5 790.1,481.5 781.4,486.5 774,483.5 766.5,485.2 760.3,481.5 752.9,488.9 744.2,496.4 734.3,493.9 731.9,485.2 726.9,486.5 718.2,482.7 712,475.3 719.5,417.1 724.9,383.6 715.9,378.7 718.4,373.7" fill="#d76c4a" stroke="#30201a" stroke-width=".8" stroke-linejoin="round"/>
<polygon points="689.7,412.6 719.5,417.1 712,475.3 698.4,473.6 691,466.6 687.3,471.6 679.8,472.8 668.7,456.7 676.1,444.3 678.6,427 677.3,419.6 686,417.1" fill="#dcd7cd" stroke="#30201a" stroke-width=".8" stroke-linejoin="round"/>
<polygon points="668.7,456.7 679.8,472.8 687.3,471.6 691,466.6 698.4,473.6 712,475.3 714.1,481.1 724,487.3 725.3,495.9 715.4,509.6 712.9,521.9 703,519.5 704.2,529.4 710.4,541.8 711.7,555.4 700.5,552.9 706.7,557.9 712.9,561.6 716.6,570.3 695.6,565.3 681.9,561.6 675.7,564.1 664.6,571.5 660.9,577.7 649.7,585.1 644.8,593.8 643.5,606.2 638.6,604.2 615,607.4 606.4,611.6 601.4,608.7 592.7,608.7 589,600 571.7,581.4 551.9,562.8 529.6,545.5 512.2,529.4 506,521.4 512.2,523.9 533.3,529.4 541.9,540.5 554.3,549.2 569.2,552.9 584.1,550.4 601.4,543 618.7,534.3 629.9,525.7 628.7,515.7 638.6,503.4 643.5,492.2 644.8,482.3 653.4,476.1 660.9,467.4 667.1,460" fill="#dcd7cd" stroke="#30201a" stroke-width=".8" stroke-linejoin="round"/>
<polygon points="473.3,176.8 512.9,181.8 534,211.5 538.9,225.1 542.6,226.4 543.9,241.2 547.6,258.6 542.6,274.8 541.9,294.1 569.9,297.1 567.4,303.3 548.8,313.2 543.1,323.1 543.1,328 553.8,334.2 560,335.5 560,344.1 553.8,347.9 536.5,356.5 519.1,370.2 504.2,382.6 485.7,383.3 477,378.8 467.1,368.9 457.2,371.4 449.7,366.5 442.3,351.6 444.8,344.2 443.5,331.8 431.1,316.9 431.1,308.2 439.8,307 443.5,274.8 446,250 454.7,246.2 457.2,228.8 460.9,209 459.6,199.1 464.6,191.7" fill="#d84839" stroke="#30201a" stroke-width=".8" stroke-linejoin="round"/>
<polygon points="542.6,226.4 548.8,228.8 562.5,232.6 566.2,240 571.6,245 581,248.7 591,246.2 597.2,250 604.6,255 607,264.9 610.8,278.5 610.8,287.2 602.1,279.7 598.4,283.4 600.9,289.6 596.4,302 596,308.2 597.2,311.9 599.6,321.9 593.4,319.4 584.8,317.4 572.4,320.6 565,325.6 560,335.5 553.8,334.2 543.1,328 543.1,323.1 548.8,313.2 567.4,303.3 569.9,297.1 541.9,294.1 542.6,274.8 547.6,258.6 543.9,241.2" fill="#dc483a" stroke="#30201a" stroke-width=".8" stroke-linejoin="round"/>
</g></svg><!--/MAPSVG-->
 <div class="abs" style="left:10px;top:10px;width:26px;height:53px;background:#fff;border-radius:4px;box-shadow:0 0 2px rgba(0,0,0,.5)">
  <div class="abs" style="left:0;top:26px;width:26px;height:1px;background:#ccc"></div>
  <svg class="abs" style="left:0;top:0" width="26" height="53"><path d="M8 13.5H18M13 8.5V18.5" stroke="#000" stroke-width="2"/><path d="M8.5 40H17.5" stroke="#000" stroke-width="2"/></svg>
 </div>
 <div class="mbtn" style="left:52px;width:57px">Single</div>
 <div class="mbtn" style="left:116px;width:76px">Rectangle</div>
 <div class="mbtn" style="left:199px;width:66px">Polygon</div>
 <div class="mbtn" style="left:272px;width:101px;background:#f0f0f0;color:#777;font-weight:normal;border:1px solid #ccc;line-height:22px;letter-spacing:0">Apply Changes</div>
 <div class="abs" style="left:826px;top:10px;width:84px;height:22px;background:#fff;border-radius:2px;font-size:11px;line-height:22px;padding-left:8px">Aerial Map<svg class="abs" style="left:68px;top:7px" width="10" height="8" viewBox="0 0 10 8"><path d="M1 1.5L5 5.5L9 1.5" fill="none" stroke="#000" stroke-width="2"/></svg></div>
</div>
<div id="ftr">
 <span style="left:780.5px;top:6px">Feedback</span>
 <span style="left:836.5px;top:6px">Enquiry</span>
 <span style="left:883px;top:6px">Need Help?</span>
 <span style="left:946.5px;top:6px">Training</span>
 <span style="right:32px;top:1.5px;text-align:right;line-height:10px">Powered by SuperSTAR<br>WingArc Australia</span>
 <svg class="abs" style="left:1113px;top:3px" width="20" height="18" viewBox="0 0 20 18"><path d="M4 2.2L9.6 1.2L9.2 16L3.8 17Z" fill="#c4262a"/><text x="3.9" y="13.2" font-family="Liberation Sans, sans-serif" font-weight="bold" font-style="italic" font-size="11.5" fill="#fff">1</text><text x="10" y="14" font-family="Liberation Sans, sans-serif" font-weight="bold" font-style="italic" font-size="8.5" textLength="7.5" lengthAdjust="spacingAndGlyphs" fill="#16243c">ST</text></svg>
</div>
<div id="frame"></div>
</body></html>
